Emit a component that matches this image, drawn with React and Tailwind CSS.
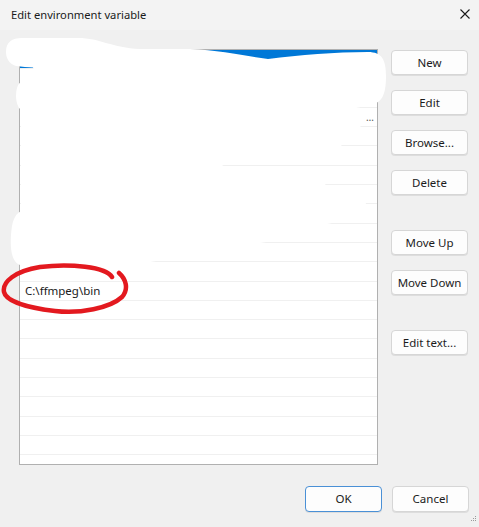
const sideButtons = [
  { label: 'New', gap: 'mt-0' },
  { label: 'Edit', gap: 'mt-[15px]' },
  { label: 'Browse...', gap: 'mt-[15px]' },
  { label: 'Delete', gap: 'mt-[15px]' },
  { label: 'Move Up', gap: 'mt-[35px]' },
  { label: 'Move Down', gap: 'mt-[15px]' },
  { label: 'Edit text...', gap: 'mt-[35px]' },
];

const rows = Array.from({ length: 22 }, (_, i) => i);

function WinButton({ children, primary, className = '' }) {
  return (
    <button
      className={`h-[25px] w-[77px] rounded-[4px] border bg-[#fdfdfd] text-[11.5px] text-[#1b1b1b] shadow-[0_1px_0_rgba(0,0,0,0.08)] ${
        primary ? 'border-[#4a90d6]' : 'border-[#d6d6d6]'
      } ${className}`}
    >
      {children}
    </button>
  );
}

export default function App() {
  return (
    <div
      className="relative w-[479px] h-[527px] overflow-hidden bg-[#f0f0f0]"
      style={{ fontFamily: '"Noto Sans", "Open Sans", sans-serif' }}
    >
      {/* Title bar */}
      <div className="flex h-[30px] items-center justify-between bg-[#f3f3f3] pl-[11px] pr-[9px]">
        <span className="text-[11.2px] text-[#1a1a1a]">Edit environment variable</span>
        <svg width="10" height="10" viewBox="0 0 10 10" className="mb-[2px]">
          <path d="M0.5 0.5 L9.5 9.5 M9.5 0.5 L0.5 9.5" stroke="#1a1a1a" strokeWidth="1.1" fill="none" />
        </svg>
      </div>

      <div className="flex pt-[19px] pl-[19px]">
        {/* List */}
        <div className="h-[416px] w-[359px] overflow-hidden border border-[#b0b0b0] bg-white">
          {rows.map((i) => (
            <div
              key={i}
              className={`flex h-[19.3px] items-center border-b border-[#f0f0f0] pl-[5px] pr-[3px] text-[11.5px] text-[#1a1a1a] ${
                i === 0 ? 'bg-[#0078d7]' : ''
              }`}
            >
              {i === 3 && <span className="ml-auto text-[10px] leading-none text-[#555]">…</span>}
              {i === 12 && <span>C:\ffmpeg\bin</span>}
            </div>
          ))}
        </div>

        {/* Side buttons */}
        <div className="ml-[13px] flex flex-col pt-[1px]">
          {sideButtons.map((b) => (
            <WinButton key={b.label} className={b.gap}>
              {b.label}
            </WinButton>
          ))}
        </div>
      </div>

      {/* Bottom buttons */}
      <div className="mt-[21px] flex justify-end gap-[10px] pr-[10px]">
        <WinButton primary className="h-[26px]">OK</WinButton>
        <WinButton className="h-[26px]">Cancel</WinButton>
      </div>

      {/* Scribbles drawn over the screenshot */}
      <svg className="pointer-events-none absolute inset-0" width="479" height="527" viewBox="0 0 479 527">
        <path
          fill="#ffffff"
          d="M6 52 C6 42 12 38 22 38 L78 38 C100 38 112 48 140 49 L190 49 C220 50 245 56 268 59 C300 55 335 52 368 52 C382 52 386 60 386 76 C386 95 382 103 370 105 L356 108 L361 126 C352 135 342 140 341 147 C300 150 230 158 222 166 C270 175 320 178 326 185 C345 192 366 198 366 204 C350 212 335 216 332 223 C300 230 270 236 266 242 C220 250 170 255 156 261 C120 268 60 272 40 270 L20 265 C12 262 10 250 11 235 C12 222 14 215 21 211 L21 110 C16 106 15 95 17 88 C19 81 24 80 30 80 L34 70 L33 67.5 C28 67 22 67 16 66 C9 64 6 58 6 52 Z"
        />
        <path
          fill="none"
          stroke="#e3191f"
          strokeWidth="4.5"
          strokeLinecap="round"
          d="M112 277 C106 267 70 263 40 267 C15 271 2 282 4 292 C6 302 30 308 55 311 C80 314 110 308 122 297 C129 289 126 279 119 273"
        />
        <g fill="#9a9a9a">
          <rect x="475" y="516" width="1" height="1" />
          <rect x="473" y="518" width="1" height="1" />
          <rect x="475" y="518" width="1" height="1" />
          <rect x="471" y="520" width="1" height="1" />
          <rect x="473" y="520" width="1" height="1" />
          <rect x="475" y="520" width="1" height="1" />
        </g>
      </svg>
    </div>
  );
}
